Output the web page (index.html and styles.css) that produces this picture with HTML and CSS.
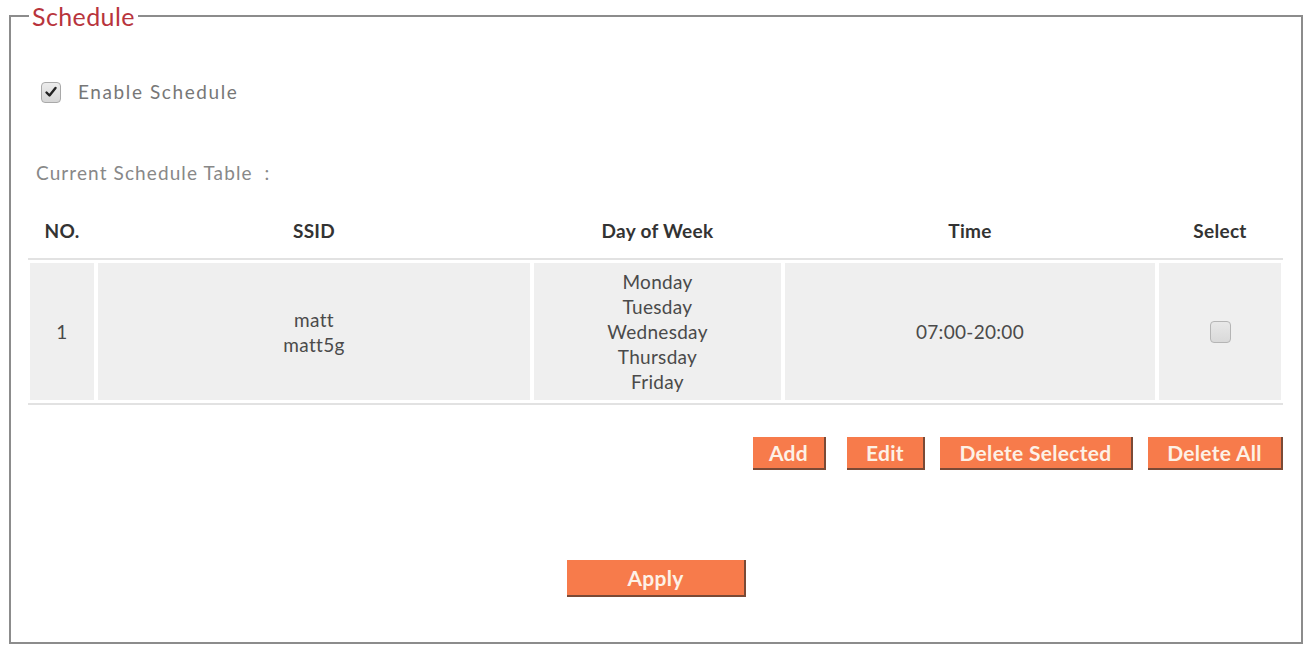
FILE: index.html
```html
<!DOCTYPE html>
<html>
<head>
<meta charset="utf-8">
<link rel="stylesheet" href="styles.css">
</head>
<body>
<fieldset class="panel">
  <legend class="panel-title">Schedule</legend>
  <label class="enable">
    <span class="cb checked"><svg viewBox="0 0 20 20" width="20" height="20"><path d="M5.5 10.5 L8.5 13.5 L14.5 6" fill="none" stroke="#222" stroke-width="2.4" stroke-linecap="round" stroke-linejoin="round"/></svg></span>
    <span class="enable-text">Enable Schedule</span>
  </label>
  <div class="caption">Current Schedule Table &nbsp;:</div>
  <div class="table">
    <div class="th">NO.</div>
    <div class="th">SSID</div>
    <div class="th">Day of Week</div>
    <div class="th">Time</div>
    <div class="th">Select</div>
    <div class="rule"></div>
    <div class="td">1</div>
    <div class="td">matt<br>matt5g</div>
    <div class="td">Monday<br>Tuesday<br>Wednesday<br>Thursday<br>Friday</div>
    <div class="td">07:00-20:00</div>
    <div class="td"><span class="cb"></span></div>
    <div class="rule"></div>
  </div>
  <div class="actions">
    <button class="btn btn-add">Add</button>
    <button class="btn btn-edit">Edit</button>
    <button class="btn btn-dsel">Delete Selected</button>
    <button class="btn btn-dall">Delete All</button>
  </div>
  <div class="apply-row">
    <button class="btn btn-apply">Apply</button>
  </div>
</fieldset>
</body>
</html>
```

FILE: styles.css
```css
html, body {
  margin: 0;
  padding: 0;
  background: #fff;
}
body {
  font-family: "Lato", "Open Sans", sans-serif;
  color: #444;
}
.panel {
  box-sizing: border-box;
  margin: 2px 0 0 9px;
  width: 1294px;
  min-width: 0;
  height: 642px;
  border: 2px solid #8c8c8c;
  padding: 0;
}
.panel-title {
  margin-left: 18px;
  padding: 0 3px 0 3px;
  font-size: 25px;
  line-height: 28px;
  letter-spacing: 0.4px;
  color: #b8343c;
}
.enable {
  display: flex;
  align-items: center;
  gap: 17px;
  margin: 52px 0 0 30px;
  height: 20px;
}
.cb {
  box-sizing: border-box;
  display: inline-block;
  width: 20px;
  height: 21px;
  border: 1.5px solid #a9a9a9;
  border-radius: 4px;
  background: linear-gradient(#ececec, #d6d6d6);
}
.cb svg {
  display: block;
  margin: -1px 0 0 -1px;
}
.enable-text {
  font-size: 19px;
  letter-spacing: 1.6px;
  color: #777;
  padding-bottom: 2px;
}
.caption {
  margin: 59px 0 0 25px;
  font-size: 19px;
  line-height: 24px;
  color: #888;
  letter-spacing: 1.1px;
}
.table {
  display: grid;
  grid-template-columns: 64px 432px 247px 370px 122px;
  column-gap: 4px;
  margin: 21px 0 0 17px;
  width: 1255px;
  padding: 0 2px;
  box-sizing: border-box;
}
.th {
  box-sizing: border-box;
  height: 52px;
  padding-bottom: 4px;
  display: flex;
  align-items: center;
  justify-content: center;
  font-weight: bold;
  font-size: 19px;
  letter-spacing: 0.3px;
  color: #333;
}
.rule {
  grid-column: 1 / -1;
  margin: 0 -2px;
  height: 2px;
  background: #e2e2e2;
}
.td {
  margin: 3px 0;
  height: 137px;
  background: #efefef;
  display: flex;
  align-items: center;
  justify-content: center;
  text-align: center;
  font-size: 19px;
  letter-spacing: 0.3px;
  line-height: 25px;
  color: #4a4a4a;
}
.td .cb {
  width: 21px;
  height: 22px;
  border-color: #b5b5b5;
  background: linear-gradient(#e8e8e8, #d9d9d9);
}
.actions {
  display: flex;
  justify-content: flex-end;
  gap: 15px;
  margin: 32px 0 0 0;
  width: 1272px;
}
.btn {
  box-sizing: border-box;
  border: none;
  border-right: 2px solid #7a4a36;
  border-bottom: 2px solid #7a4a36;
  background: #f77b4b;
  color: #fdf1e6;
  font-family: "Lato", "Open Sans", sans-serif;
  font-weight: bold;
  font-size: 21px;
  letter-spacing: 0.3px;
  height: 33px;
  padding: 0;
}
.btn-add { width: 73px; margin-right: 6px; }
.btn-edit { width: 78px; }
.btn-dsel { width: 193px; }
.btn-dall { width: 135px; }
.apply-row {
  display: flex;
  justify-content: center;
  margin: 90px 0 0 1px;
}
.btn-apply {
  width: 179px;
  height: 37px;
}
```
